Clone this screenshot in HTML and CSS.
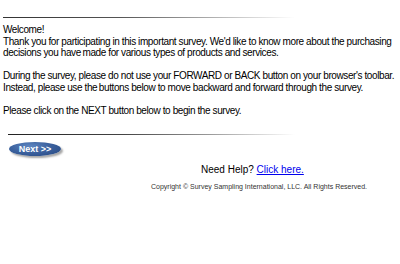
FILE: index.html
```html
<!DOCTYPE html>
<html>
<head>
<meta charset="utf-8">
<link rel="stylesheet" href="styles.css">
</head>
<body>
<div class="page">
  <div class="rule rule-top"></div>
  <div class="intro">
    <p>Welcome!<br>Thank you for participating in this important survey. We'd like to know more about the purchasing decisions you have&#8201;made for various types of products and services.</p>
    <p>During the survey, please do not use your FORWARD or BACK button on your browser's toolbar. Instead, please use the&#8201;buttons below to move backward and forward through the survey.</p>
    <p>Please click on the NEXT button below to begin the survey.</p>
  </div>
  <div class="rule rule-bottom"></div>
  <div class="actions">
    <button class="next" type="button"><span>Next &gt;&gt;</span></button>
  </div>
  <div class="help">Need Help? <a href="#">Click here.</a></div>
  <div class="copy">Copyright © Survey Sampling International, LLC. All Rights Reserved.</div>
</div>
</body>
</html>
```
FILE: styles.css
```css
html, body {
  margin: 0;
  padding: 0;
  background: #fff;
}
body {
  font-family: "Liberation Sans", Arial, sans-serif;
  font-size: 10px;
  color: #000;
}
.page {
  padding: 17px 0 0 3px;
  width: 397px;
}
.rule {
  height: 1px;
}
.rule-top {
  width: 292px;
  background: linear-gradient(to right, #333 0%, #555 40%, #aaa 70%, #fff 100%);
}
.rule-bottom {
  margin-left: 5px;
  width: 287px;
  background: linear-gradient(to right, #222 0%, #444 40%, #999 70%, #fff 100%);
}
.intro {
  padding-top: 6px;
  padding-bottom: 18px;
  letter-spacing: -0.4px;
}
.intro p {
  margin: 0 0 11.5px 0;
  line-height: 11.5px;
}
.intro p:last-child {
  margin-bottom: 0;
}
.actions {
  padding: 7px 0 0 6px;
  height: 21px;
}
.next {
  width: 52px;
  height: 14px;
  border: none;
  border-radius: 50%;
  padding: 0;
  background: radial-gradient(ellipse at 40% 30%, #5e86c0 0%, #3c629f 45%, #24457e 100%);
  box-shadow: 2px 2px 2px rgba(0,0,0,0.35);
  color: #fff;
  font-family: "Liberation Sans Narrow", "Liberation Sans", Arial, sans-serif;
  font-weight: bold;
  font-size: 9px;
  line-height: 14px;
  cursor: pointer;
}
.help {
  padding-left: 198px;
  margin-top: 1px;
  font-size: 10px;
  line-height: 12px;
}
.help a {
  color: #0000ee;
}
.copy {
  margin-top: 6px;
  padding-left: 148px;
  font-size: 7px;
  color: #333;
  line-height: 9px;
}
```
